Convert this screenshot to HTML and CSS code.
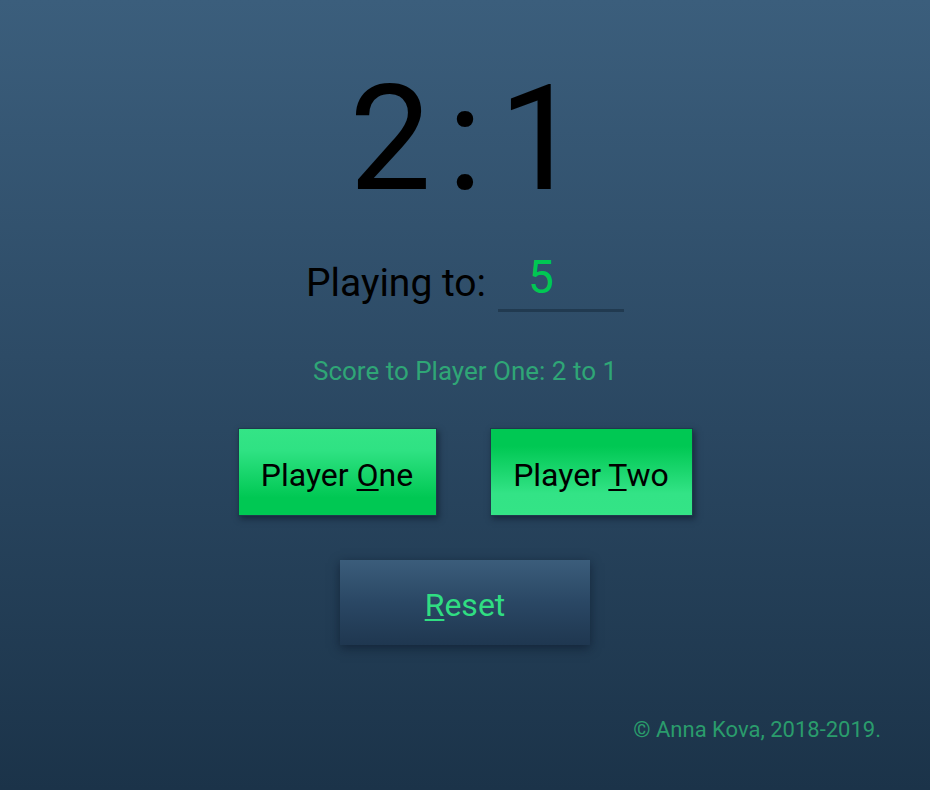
FILE: index.html
```html
<!DOCTYPE html>
<html lang="en">
<head>
<meta charset="utf-8">
<title>Ping-Pong Score Keeper</title>
<link rel="stylesheet" href="styles.css">
</head>
<body>
<main class="app">
  <h1 class="score"><span class="num">2</span><span class="colon">:</span><span class="num">1</span></h1>
  <div class="target">
    <label class="target-label" for="limit">Playing to:</label>
    <input class="target-input" id="limit" type="text" value="5">
  </div>
  <p class="status">Score to Player One: 2 to 1</p>
  <div class="players">
    <button class="btn btn-player btn-one">Player <u>O</u>ne</button>
    <button class="btn btn-player btn-two">Player <u>T</u>wo</button>
  </div>
  <button class="btn btn-reset"><u>R</u>eset</button>
</main>
<footer class="footer">© Anna Kova, 2018-2019.</footer>
</body>
</html>
```

FILE: styles.css
```css
html, body {
  margin: 0;
  padding: 0;
}
body {
  width: 930px;
  height: 790px;
  background: linear-gradient(to bottom, #3b5e7c 0%, #2d4b66 45%, #1b3349 100%);
  font-family: Roboto, "DejaVu Sans", sans-serif;
  display: flex;
  flex-direction: column;
  overflow: hidden;
}
.app {
  display: flex;
  flex-direction: column;
  align-items: center;
  flex: 1;
}
.score {
  margin: 67px 0 0 0;
  font-size: 146px;
  line-height: 146px;
  font-weight: 400;
  color: #000;
  display: flex;
  align-items: baseline;
  gap: 16px;
}
.target {
  margin-top: 38px;
  display: flex;
  align-items: flex-end;
  gap: 12px;
}
.target-label {
  font-size: 39px;
  color: #000;
  line-height: 48px;
  padding-bottom: 5px;
}
.target-input {
  width: 96px;
  padding: 0 0 6px 30px;
  border: none;
  border-bottom: 3px solid #213a50;
  background: transparent;
  color: #00c853;
  font-family: Roboto, sans-serif;
  font-size: 46px;
  line-height: 52px;
  outline: none;
}
.status {
  margin: 44px 0 0 0;
  font-size: 26px;
  color: #2fa676;
  line-height: 30px;
}
.players {
  margin-top: 42px;
  display: flex;
  gap: 53px;
}
.btn {
  font-family: Roboto, sans-serif;
  cursor: pointer;
}
.btn-player {
  width: 199px;
  height: 88px;
  padding-top: 6px;
  border: 1px solid #1e3a4c;
  font-size: 32px;
  color: #000;
  box-shadow: 2px 3px 6px rgba(10, 20, 35, 0.55);
}
.btn-one {
  background: linear-gradient(to bottom, #34e486 0%, #2fe283 25%, #00c853 80%, #00c853 100%);
}
.btn-two {
  width: 203px;
  background: linear-gradient(to bottom, #00c853 0%, #00c853 20%, #33e386 75%, #34e486 100%);
}
.btn u {
  text-underline-offset: 3px;
  text-decoration-thickness: 2px;
}
.btn-reset {
  margin-top: 44px;
  width: 250px;
  height: 85px;
  padding-top: 6px;
  border: none;
  background: linear-gradient(to bottom, #3b5d7b 0%, #2a4764 50%, #1f3750 100%);
  color: #30dd82;
  font-size: 32px;
  box-shadow: 0 3px 10px rgba(10, 22, 38, 0.6);
}
.footer {
  text-align: right;
  padding: 0 49px 47px 0;
  font-size: 22px;
  color: #2a9c6c;
  line-height: 26px;
}
```
